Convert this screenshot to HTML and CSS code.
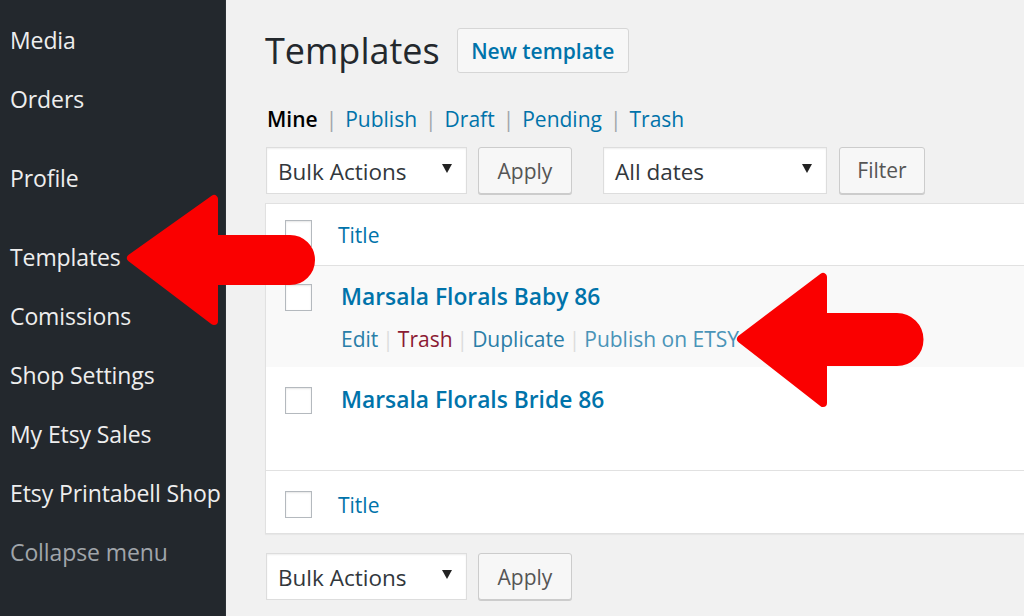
FILE: index.html
```html
<!DOCTYPE html>
<html lang="en">
<head>
<meta charset="utf-8">
<title>Templates</title>
<link rel="stylesheet" href="styles.css">
</head>
<body>
<div class="page">
  <aside class="sidebar">
    <ul class="menu">
      <li>Media</li>
      <li>Orders</li>
      <li class="sep">Profile</li>
      <li class="sep">Templates</li>
      <li>Comissions</li>
      <li>Shop Settings</li>
      <li>My Etsy Sales</li>
      <li>Etsy Printabell Shop</li>
      <li class="collapse">Collapse menu</li>
    </ul>
  </aside>
  <main class="content">
    <div class="title-row">
      <h1 class="page-title">Templates</h1>
      <a class="btn btn-action">New template</a>
    </div>
    <ul class="subsubsub">
      <li class="current">Mine</li><li class="bar">|</li>
      <li><a>Publish</a></li><li class="bar">|</li>
      <li><a>Draft</a></li><li class="bar">|</li>
      <li><a>Pending</a></li><li class="bar">|</li>
      <li><a>Trash</a></li>
    </ul>
    <div class="toolbar">
      <div class="select select-bulk"><span>Bulk Actions</span><svg class="caret" width="10" height="9" viewBox="0 0 10 9"><path d="M0 0h10L5 9z"/></svg></div>
      <button class="btn btn-apply">Apply</button>
      <div class="select select-dates"><span>All dates</span><svg class="caret" width="10" height="9" viewBox="0 0 10 9"><path d="M0 0h10L5 9z"/></svg></div>
      <button class="btn btn-filter">Filter</button>
    </div>
    <div class="table">
      <div class="row head">
        <span class="cb"></span><a class="col-title">Title</a>
      </div>
      <div class="row item alt">
        <span class="cb"></span>
        <div class="cell">
          <a class="row-title">Marsala Florals Baby 86</a>
          <div class="actions">
            <a>Edit</a><span class="sepbar">|</span><a class="trash">Trash</a><span class="sepbar">|</span><a>Duplicate</a><span class="sepbar">|</span><a class="etsy">Publish on ETSY</a>
          </div>
        </div>
      </div>
      <div class="row item second">
        <span class="cb"></span>
        <div class="cell">
          <a class="row-title">Marsala Florals Bride 86</a>
        </div>
      </div>
      <div class="row foot">
        <span class="cb"></span><a class="col-title">Title</a>
      </div>
    </div>
    <div class="toolbar bottom">
      <div class="select select-bulk"><span>Bulk Actions</span><svg class="caret" width="10" height="9" viewBox="0 0 10 9"><path d="M0 0h10L5 9z"/></svg></div>
      <button class="btn btn-apply">Apply</button>
    </div>
  </main>
  <svg class="arrows" width="1024" height="616" viewBox="0 0 1024 616">
    <path d="M131 258 L214 199 L214 239 L290 239 A21 21 0 0 1 290 281 L214 281 L214 321 Z"/>
    <path d="M741 339 L823 277 L823 317 L897 317 A22.5 22.5 0 0 1 897 362 L823 362 L823 403 Z"/>
  </svg>
</div>
</body>
</html>
```
FILE: styles.css
```css
* { box-sizing: border-box; }
html, body { margin: 0; padding: 0; }
body {
  font-family: "Open Sans", "Noto Sans", sans-serif;
  background: #f1f1f1;
  color: #444;
}
.page {
  position: relative;
  display: flex;
  width: 1024px;
  height: 616px;
  overflow: hidden;
}
.sidebar {
  flex: 0 0 226px;
  background: #23282d;
  border-right: 1px solid #2c3136;
}
.menu {
  list-style: none;
  margin: 0;
  padding: 11px 0 0 10px;
}
.menu li {
  height: 59px;
  line-height: 59px;
  font-size: 23px;
  letter-spacing: -0.1px;
  color: #eeeeee;
  white-space: nowrap;
}
.menu li.sep { margin-top: 20px; }
.menu li.collapse { color: #a0a5aa; }

.content {
  flex: 1;
  padding: 28px 0 0 39px;
  min-width: 0;
}
.title-row {
  display: flex;
  align-items: center;
  height: 45px;
  gap: 17px;
}
.page-title {
  margin: 0;
  font-size: 36px;
  font-weight: 400;
  color: #23282d;
  line-height: 45px;
}
.btn {
  font-family: inherit;
  background: #f7f7f7;
  border: 1px solid #cccccc;
  border-radius: 3px;
  box-shadow: 0 1px 0 #cccccc;
  color: #555;
  font-size: 21px;
  display: flex;
  align-items: center;
  justify-content: center;
  padding: 0;
}
.btn-action {
  width: 172px;
  height: 45px;
  color: #0073aa;
  font-weight: 600;
  font-size: 21px;
  box-shadow: none;
  border-color: #d6d6d6;
}
.subsubsub {
  list-style: none;
  margin: 33px 0 0 2px;
  padding: 0;
  display: flex;
  font-size: 21px;
  line-height: 26px;
  height: 26px;
}
.subsubsub li { white-space: nowrap; }
.subsubsub .current { color: #000; font-weight: 600; }
.subsubsub a { color: #0073aa; }
.subsubsub .bar { color: #a0a5aa; padding: 0 8px; }

.toolbar {
  display: flex;
  align-items: center;
  margin-top: 14px;
  height: 48px;
}
.select {
  height: 47px;
  background: #fff;
  border: 1px solid #dddddd;
  box-shadow: inset 0 1px 2px rgba(0,0,0,.07);
  display: flex;
  align-items: center;
  justify-content: space-between;
  padding: 3px 14px 0 11px;
  font-size: 22.5px;
  color: #32373c;
}
.select-bulk { width: 201px; margin-left: 1px; }
.select-dates { width: 224px; margin-left: 31px; }
.caret { fill: #222; margin-top: -6px; }
.btn-apply { width: 94px; height: 47px; margin-left: 11px; padding-top: 2px; }
.btn-filter { width: 86px; height: 47px; margin-left: 12px; }

.table {
  margin-top: 9px;
  background: #fff;
  border: 1px solid #e1e1e1;
  border-right: none;
  box-shadow: 0 1px 1px rgba(0,0,0,.04);
}
.row {
  display: flex;
  align-items: flex-start;
  padding-left: 19px;
}
.row.head {
  height: 62px;
  border-bottom: 1px solid #e1e1e1;
  align-items: center;
}
.row.head .cb { margin-top: -3px; }
.row.foot {
  height: 63px;
  border-top: 1px solid #e1e1e1;
  align-items: center;
  padding-top: 5px;
}
.row.item { height: 101px; padding-top: 18px; }
.row.alt { background: #f9f9f9; }
.row.second { height: 103px; padding-top: 20px; }
.cb {
  flex: 0 0 27px;
  width: 27px;
  height: 27px;
  border: 1px solid #b4b9be;
  background: #fff;
  box-shadow: inset 0 1px 2px rgba(0,0,0,.1);
}
.col-title {
  color: #0073aa;
  font-size: 21px;
  margin-left: 26px;
}
.cell { margin-left: 29px; }
.row-title {
  display: block;
  color: #0073aa;
  font-weight: 600;
  font-size: 22.8px;
  line-height: 30px;
  margin-top: -2px;
}
.actions {
  margin-top: 14px;
  font-size: 21px;
  line-height: 26px;
  color: #0073aa;
  white-space: nowrap;
}
.actions a { color: #2a7ea8; }
.actions .trash { color: #8b1a33; }
.actions .etsy { color: #4a94b8; }
.actions .sepbar { color: #dddddd; padding: 0 4px; }

.toolbar.bottom { margin-top: 18px; }

.arrows {
  position: absolute;
  left: 0;
  top: 0;
  pointer-events: none;
}
.arrows path {
  fill: #fa0000;
  stroke: #fa0000;
  stroke-width: 8;
  stroke-linejoin: round;
}
```
